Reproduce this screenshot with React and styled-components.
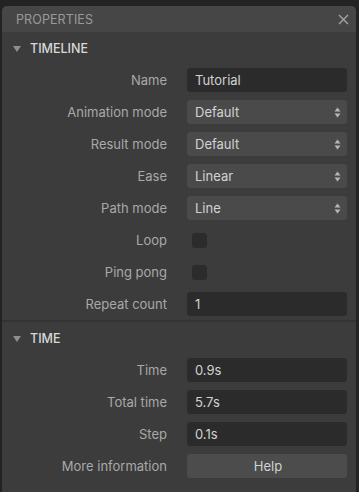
import React from "react";
import styled, { createGlobalStyle } from "styled-components";

const Global = createGlobalStyle`
  html, body { margin: 0; padding: 0; background: #232323; height: 100%; }
  body { font-family: Inter, "Liberation Sans", Arial, sans-serif; -webkit-font-smoothing: antialiased; }
  #root { height: 100%; }
`;

const Panel = styled.div`
  margin: 6px 3px 0 2px;
  height: calc(100% - 6px);
  background: #3c3c3c;
  border-radius: 5px 5px 0 0;
  overflow: hidden;
  display: flex;
  flex-direction: column;
`;

const Header = styled.div`
  height: 26px;
  background: #464646;
  display: flex;
  align-items: center;
  justify-content: space-between;
  padding: 0 7px 0 14px;
  flex-shrink: 0;
`;

const Title = styled.span`
  font-size: 12.5px;
  color: #9a9a9a;
  letter-spacing: 0.1px;
`;

const Close = styled.button`
  background: none;
  border: none;
  padding: 0;
  width: 12px;
  height: 12px;
  display: flex;
  align-items: center;
  justify-content: center;
  cursor: pointer;
`;

const Section = styled.div`
  border-bottom: ${(p) => (p.$last ? "none" : "2px solid #333333")};
`;

const SectionHead = styled.div`
  height: 32px;
  display: flex;
  align-items: center;
  padding-left: 11px;
  gap: 9px;
  font-size: 12.5px;
  font-weight: 500;
  color: #d8d8d8;
`;

const Tri = styled.span`
  width: 0;
  height: 0;
  border-left: 4px solid transparent;
  border-right: 4px solid transparent;
  border-top: 6px solid #8f8f8f;
  margin-top: 1px;
`;

const Row = styled.div`
  height: 32px;
  display: grid;
  grid-template-columns: 165px 160px;
  column-gap: 20px;
  align-items: center;
`;

const Label = styled.span`
  text-align: right;
  font-size: 13px;
  color: #a9a9a9;
`;

const Field = styled.div`
  height: 24px;
  border-radius: 3px;
  background: ${(p) => (p.$kind === "select" ? "#4a4a4a" : p.$kind === "button" ? "#4c4c4c" : "#2b2b2b")};
  display: flex;
  align-items: center;
  justify-content: ${(p) => (p.$kind === "button" ? "center" : "space-between")};
  padding: 0 6px 0 8px;
  font-size: 13px;
  color: #d2d2d2;
  box-sizing: border-box;
`;

const Check = styled.div`
  width: 15px;
  height: 15px;
  border-radius: 3px;
  background: #2c2c2c;
  margin-left: 5px;
`;

const Arrows = () => (
  <svg width="7" height="11" viewBox="0 0 7 11">
    <path d="M3.5 0.5 L6.5 4.5 L0.5 4.5 Z" fill="#b5b5b5" />
    <path d="M3.5 10.5 L6.5 6.5 L0.5 6.5 Z" fill="#b5b5b5" />
  </svg>
);

const PropRow = ({ label, kind, value }) => (
  <Row>
    <Label>{label}</Label>
    {kind === "check" ? (
      <Check />
    ) : (
      <Field $kind={kind}>
        <span>{value}</span>
        {kind === "select" && <Arrows />}
      </Field>
    )}
  </Row>
);

export default function App() {
  return (
    <>
      <Global />
      <Panel>
        <Header>
          <Title>PROPERTIES</Title>
          <Close aria-label="close">
            <svg width="11" height="11" viewBox="0 0 11 11">
              <path d="M1 1 L10 10 M10 1 L1 10" stroke="#a5a5a5" strokeWidth="1.4" />
            </svg>
          </Close>
        </Header>
        <Section>
          <SectionHead>
            <Tri />
            TIMELINE
          </SectionHead>
          <PropRow label="Name" kind="text" value="Tutorial" />
          <PropRow label="Animation mode" kind="select" value="Default" />
          <PropRow label="Result mode" kind="select" value="Default" />
          <PropRow label="Ease" kind="select" value="Linear" />
          <PropRow label="Path mode" kind="select" value="Line" />
          <PropRow label="Loop" kind="check" />
          <PropRow label="Ping pong" kind="check" />
          <PropRow label="Repeat count" kind="text" value="1" />
        </Section>
        <Section $last>
          <SectionHead>
            <Tri />
            TIME
          </SectionHead>
          <PropRow label="Time" kind="text" value="0.9s" />
          <PropRow label="Total time" kind="text" value="5.7s" />
          <PropRow label="Step" kind="text" value="0.1s" />
          <PropRow label="More information" kind="button" value="Help" />
        </Section>
      </Panel>
    </>
  );
}
